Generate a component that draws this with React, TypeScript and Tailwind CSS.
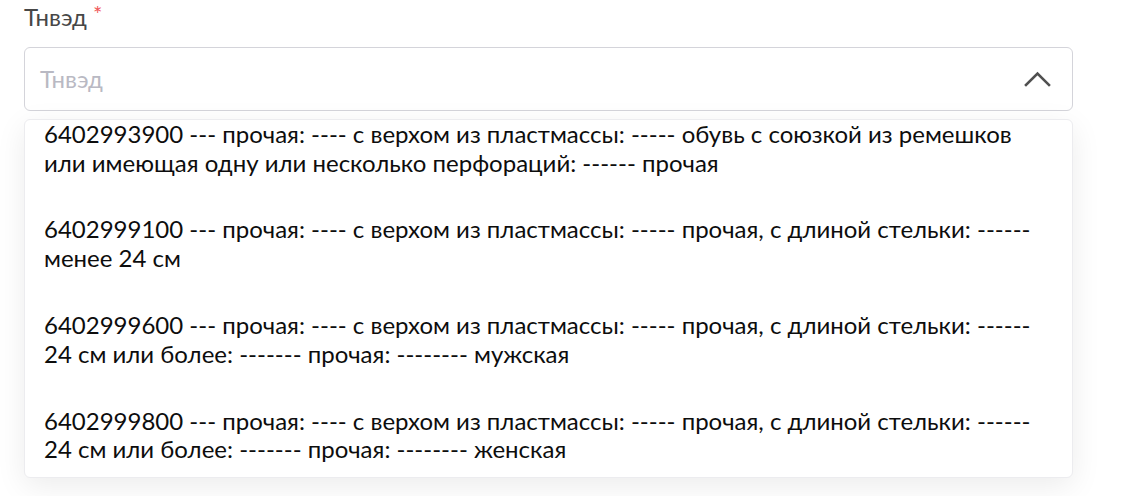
import { useLayoutEffect, useRef } from "react";

const options = [
  "6402993900 --- прочая: ---- с верхом из пластмассы: ----- обувь с союзкой из ремешков или имеющая одну или несколько перфораций: ------ прочая",
  "6402999100 --- прочая: ---- с верхом из пластмассы: ----- прочая, с длиной стельки: ------ менее 24 см",
  "6402999600 --- прочая: ---- с верхом из пластмассы: ----- прочая, с длиной стельки: ------ 24 см или более: ------- прочая: -------- мужская",
  "6402999800 --- прочая: ---- с верхом из пластмассы: ----- прочая, с длиной стельки: ------ 24 см или более: ------- прочая: -------- женская",
];

export default function App() {
  const listRef = useRef<HTMLDivElement>(null);

  // the list in the picture is scrolled down a little
  useLayoutEffect(() => {
    if (listRef.current) listRef.current.scrollTop = 19;
  }, []);

  return (
    <div className="w-[1124px] h-[496px] bg-white font-['Lato','Noto_Sans',sans-serif] overflow-hidden">
      <div className="ml-6 w-[1049px] pt-[3px]">
        <label className="block text-[24px] leading-[1.2] text-[#474747]">
          Тнвэд <span className="text-[#f0565a] text-[22px] leading-none align-top">*</span>
        </label>
        <div className="mt-[15px] h-[64px] border border-[#d4d4da] rounded-md flex items-center justify-between pl-[15px] pr-[21px]">
          <span className="text-[24px] text-[#b9b9c3]">Тнвэд</span>
          <svg width="27" height="16" viewBox="0 0 27 16" fill="none" stroke="#505050" strokeWidth="2.6" strokeLinecap="square">
            <path d="M2 14 L13.5 2.5 L25 14" />
          </svg>
        </div>
        <div className="mt-2 h-[359px] border border-[#ececef] rounded-md bg-white shadow-[0_8px_30px_rgba(0,0,0,0.08)]">
          <div ref={listRef} className="h-full overflow-hidden">
            {options.map((o) => (
              <div key={o} className="pl-[19px] pr-5 py-[19px] text-[24px] leading-[1.2] text-[#0d0d0d]">
                {o}
              </div>
            ))}
          </div>
        </div>
      </div>
    </div>
  );
}
